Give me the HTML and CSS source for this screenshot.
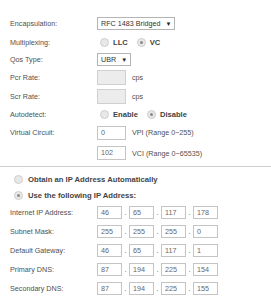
FILE: index.html
```html
<!DOCTYPE html>
<html lang="en">
<head>
    <meta charset="UTF-8">
    <meta name="viewport" content="width=device-width, initial-scale=1.0">
    <title>WAN Settings</title>
    <link rel="stylesheet" href="styles.css">
</head>
<body>
    <div class="panel">
        <div class="row">
            <span class="label">Encapsulation:</span>
            <span class="select">RFC 1483 Bridged<span class="caret">&#9660;</span></span>
        </div>
        <div class="row mid">
            <span class="label">Multiplexing:</span>
            <span class="choice"><span class="radio"></span>LLC</span>
            <span class="choice"><span class="radio on"></span>VC</span>
        </div>
        <div class="row compact">
            <span class="label">Qos Type:</span>
            <span class="select">UBR<span class="caret">&#9660;</span></span>
        </div>
        <div class="row">
            <span class="label">Pcr Rate:</span>
            <span class="field off"></span>
            <span class="unit">cps</span>
        </div>
        <div class="row">
            <span class="label">Scr Rate:</span>
            <span class="field off"></span>
            <span class="unit">cps</span>
        </div>
        <div class="row compact">
            <span class="label">Autodetect:</span>
            <span class="choice"><span class="radio"></span>Enable</span>
            <span class="choice"><span class="radio on"></span>Disable</span>
        </div>
        <div class="row">
            <span class="label">Virtual Circuit:</span>
            <span class="field">0</span>
            <span class="unit">VPI (Range 0~255)</span>
        </div>
        <div class="row vci">
            <span class="label"></span>
            <span class="field">102</span>
            <span class="unit">VCI (Range 0~65535)</span>
        </div>
    </div>

    <div class="divider"></div>

    <div class="panel ip">
        <div class="option"><span class="radio"></span>Obtain an IP Address Automatically</div>
        <div class="option"><span class="radio on"></span>Use the following IP Address:</div>

        <div class="row">
            <span class="label">Internet IP Address:</span>
            <span class="octet">46</span><span class="dot">.</span><span class="octet">65</span><span class="dot">.</span><span class="octet">117</span><span class="dot">.</span><span class="octet">178</span>
        </div>
        <div class="row">
            <span class="label">Subnet Mask:</span>
            <span class="octet">255</span><span class="dot">.</span><span class="octet">255</span><span class="dot">.</span><span class="octet">255</span><span class="dot">.</span><span class="octet">0</span>
        </div>
        <div class="row">
            <span class="label">Default Gateway:</span>
            <span class="octet">46</span><span class="dot">.</span><span class="octet">65</span><span class="dot">.</span><span class="octet">117</span><span class="dot">.</span><span class="octet">1</span>
        </div>
        <div class="row">
            <span class="label">Primary DNS:</span>
            <span class="octet">87</span><span class="dot">.</span><span class="octet">194</span><span class="dot">.</span><span class="octet">225</span><span class="dot">.</span><span class="octet">154</span>
        </div>
        <div class="row">
            <span class="label">Secondary DNS:</span>
            <span class="octet">87</span><span class="dot">.</span><span class="octet">194</span><span class="dot">.</span><span class="octet">225</span><span class="dot">.</span><span class="octet">155</span>
        </div>
    </div>
</body>
</html>
```

FILE: styles.css
```css
body {
    font-family: "Liberation Sans", Arial, sans-serif;
    font-size: 7.2px;
    margin: 0;
    padding: 0;
    background-color: #fff;
    color: #505050;
}
.panel {
    padding: 14px 0 0 10px;
}
.row {
    display: flex;
    align-items: center;
    height: 19px;
}
.row.mid {
    height: 18px;
}
.row.compact {
    height: 17px;
}
.row.vci {
    height: 22px;
}
.label {
    width: 87px;
    flex-shrink: 0;
}
.select {
    display: flex;
    align-items: center;
    height: 11px;
    padding: 0 3px 0 3px;
    border: 1px solid #b4b4b4;
    color: #333;
    font-size: 7.2px;
}
.caret {
    font-size: 6px;
    margin-left: 5px;
    color: #222;
}
.choice {
    display: flex;
    align-items: center;
    margin-left: 3px;
    margin-right: 6px;
    font-weight: bold;
    font-size: 7.6px;
    color: #444;
}
.radio {
    width: 7px;
    height: 7px;
    border: 1px solid #cdcdcd;
    border-radius: 50%;
    background: #e8e8e8;
    margin-right: 4px;
    position: relative;
}
.radio.on::after {
    content: "";
    position: absolute;
    left: 2px;
    top: 2px;
    width: 3px;
    height: 3px;
    border-radius: 50%;
    background: #8a8a8a;
}
.field {
    width: 24px;
    height: 12px;
    padding-left: 3px;
    line-height: 12px;
    border: 1px solid #c4c4c4;
    color: #666;
}
.field.off {
    height: 13px;
    background: #ececec;
    border-color: #d0d0d0;
}
.unit {
    margin-left: 6px;
}
.divider {
    height: 1px;
    margin-top: 2px;
    background: #cfcfcf;
}
.ip {
    padding-top: 4px;
}
.ip .option {
    display: flex;
    align-items: center;
    height: 16px;
    margin-left: 4px;
    font-weight: bold;
    font-size: 7.7px;
    color: #444;
}
.ip .option .radio {
    margin-right: 5px;
}
.octet {
    width: 20px;
    height: 11px;
    padding-left: 3px;
    line-height: 11px;
    border: 1px solid #c4c4c4;
    color: #666;
}
.dot {
    width: 7px;
    text-align: center;
}
```
